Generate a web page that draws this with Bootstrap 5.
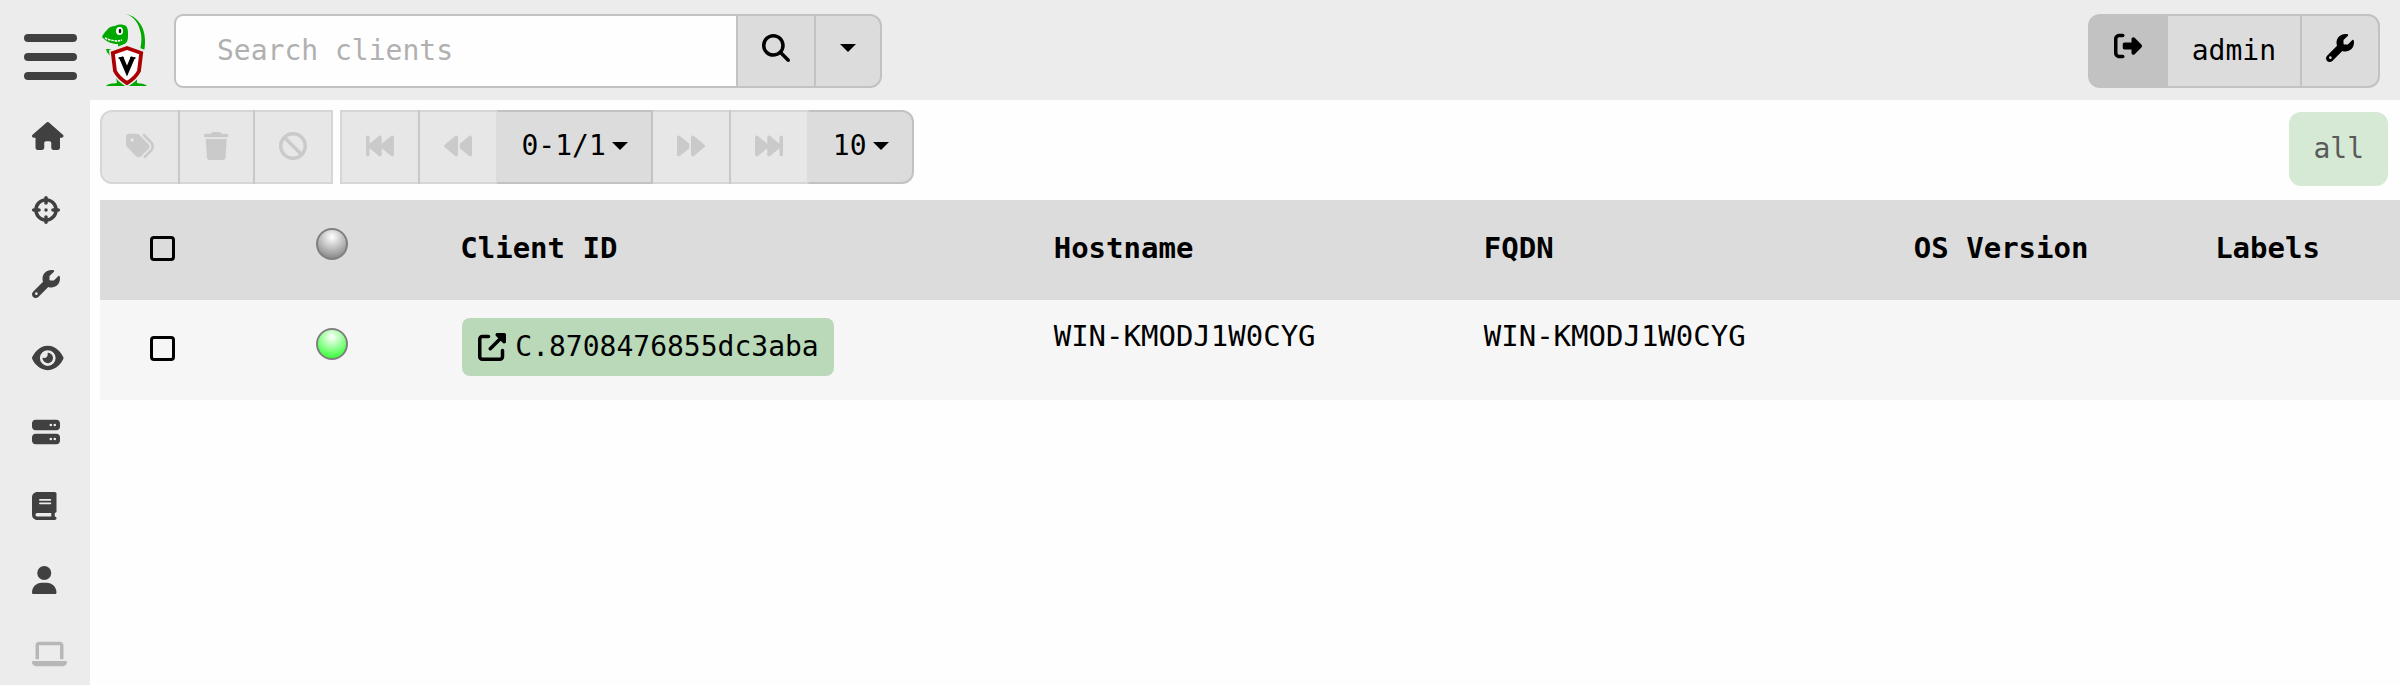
<!DOCTYPE html>
<html lang="en">
<head>
<meta charset="utf-8">
<meta name="viewport" content="width=device-width, initial-scale=1">
<title>Clients</title>
<link rel="stylesheet" href="https://cdn.jsdelivr.net/npm/bootstrap@5.3.0/dist/css/bootstrap.min.css">
<style>
  :root { --chrome: #ececec; --face: #dcdcdc; --edge: #c2c2c2; }
  body { font-family: "DejaVu Sans Mono", monospace; font-size: 28px; line-height: 42px; color: #000; background: #fefefe; }
  .ico { height: 28px; width: auto; fill: currentColor; display: block; }
  .topbar { height: 100px; background: var(--chrome); padding: 14px 20px 12px 24px; }
  .menu-btn { color: #404040; width: 53px; height: 74px; padding: 0; border: 0; background: none; }
  .menu-btn svg { width: 53px; height: 46px; margin-top: 12px; fill: currentColor; }
  .brand-link { margin: 0 27px 0 25px; }
  .brand-link svg { width: 45px; height: 74px; display: block; }
  .search-box { flex: 0 1 708px; }
  .search-box .form-control { border: 2px solid var(--edge); border-radius: 9px; font-size: 28px; color: #000; padding: 0 41px; background: #fefefe; }
  .search-box .form-control::placeholder { color: #b0b0b0; }
  .tool { height: 74px; border: 2px solid var(--edge); border-radius: 12px; background: var(--face); color: #000; font-size: 28px; line-height: 42px; padding: 0 24px 2px; display: inline-flex; align-items: center; }
  .topbar .tool { padding-bottom: 6px; }
  .topbar .tool.user-name { padding-bottom: 0; }
  .topbar .tool.tool-dark { background: var(--edge); padding-bottom: 10px; }
  .tool:disabled { background: var(--face); border-color: var(--edge); color: #afafaf; opacity: .65; padding-bottom: 2px; }
  .tool.page-menu { border-left-color: var(--face); padding-right: 23px; }
  .btn-group > .tool:not(:first-child), .input-group > .tool { margin-left: -2px !important; }
  .btn-group > .tool { flex: 0 0 auto; }
  .first-group { margin-right: -1px; }
  .first-group > .tool:last-child { border-radius: 0; }
  .pager > .tool:not(:last-child) { border-radius: 0; }
  .tool.dropdown-toggle::after { border-top: 8px solid; border-left: 8px solid transparent; border-right: 8px solid transparent; margin-left: 6px; }
  .tool.caret-only::after { margin-left: 0; }
  .sidebar { flex: 0 0 90px; background: var(--chrome); overflow: hidden; }
  .sidebar .nav-link { height: 74px; padding: 22px 0 24px 32px; color: #404040; display: flex; align-items: center; flex: none; }
  .sidebar .nav-link.disabled { color: #b7b7b7; }
  .shell { height: calc(100vh - 100px); }
  .toolbar { padding: 10px 12px 14px 10px; }
  .label-all { height: 74px; border-radius: 12px; background: #d5e9d5; color: #5a5a5a; font-size: 28px; padding: 0 24px; margin-top: 2px; border: 0; }
  .table-wrap { padding-left: 10px; }
  .clients { table-layout: fixed; width: 100%; font-size: 29px; line-height: 42px; }
  .clients th, .clients td { height: 100px; padding: 16px 13px 0; vertical-align: top; }
  .clients td { padding-top: 15px; }
  .clients th { background: var(--face); padding: 0 13px 4px; vertical-align: middle; }
  .clients td { background: #f6f6f6; }
  .clients .pick { padding: 36px 0 0 50px; vertical-align: top; }
  .clients .lamp-cell { padding: 28px 0 0 14px; vertical-align: top; }
  .clients .form-check-input { width: 25px; height: 25px; border: 3px solid #000; border-radius: 4px; background: transparent; margin: 0; display: block; }
  .lamp { width: 32px; height: 32px; border-radius: 50%; border: 2px solid #808080; display: block; background: radial-gradient(circle 24px at 50% 25%, #fff 0, #7a7a7a 100%); }
  .lamp.on { background: radial-gradient(circle 24px at 50% 25%, #fff 0, #1fff1f 100%); }
  .client-link { height: 58px; border: 0; border-radius: 8px; background: #b9d9b9; color: #000; font-size: 28px; padding: 0 15px 0 16px; margin: 3px 0 0 2px; gap: 9px; }
  .c-pick { width: 8.8%; } .c-lamp { width: 6.3%; } .c-id { width: 25.8%; } .c-host { width: 18.7%; } .c-os { width: 13.1%; }
</style>
</head>
<body>
<svg class="d-none" aria-hidden="true">
  <symbol id="wrench" viewBox="0 0 512 512"><path d="M352 320c88.4 0 160-71.6 160-160c0-15.3-2.2-30.1-6.2-44.2c-3.1-10.8-16.4-13.2-24.3-5.3l-76.8 76.8c-3 3-7.1 4.7-11.3 4.7H336c-8.8 0-16-7.2-16-16V118.6c0-4.2 1.7-8.3 4.7-11.3l76.8-76.8c7.9-7.9 5.4-21.2-5.3-24.3C382.1 2.2 367.3 0 352 0C263.6 0 192 71.6 192 160c0 19.1 3.4 37.5 9.5 54.5L19.9 396.1C7.2 408.8 0 426.1 0 444.1C0 481.6 30.4 512 67.9 512c18 0 35.3-7.2 48-19.9L297.5 310.5c17 6.2 35.4 9.5 54.5 9.5zM80 408a24 24 0 1 1 0 48 24 24 0 1 1 0-48z"/></symbol>
  <symbol id="back" viewBox="0 0 512 512"><path d="M459.5 440.6c9.5 7.9 22.8 9.7 34.1 4.4s18.4-16.6 18.4-29V96c0-12.4-7.2-23.7-18.4-29s-24.5-3.6-34.1 4.4L288 214.3V256v41.7L459.5 440.6zM256 352V256 128 96c0-12.4-7.2-23.7-18.4-29s-24.5-3.6-34.1 4.4l-192 160C4.2 237.5 0 246.5 0 256s4.2 18.5 11.5 24.6l192 160c9.5 7.9 22.8 9.7 34.1 4.4s18.4-16.6 18.4-29V352z"/></symbol>
  <symbol id="first" viewBox="0 0 512 512"><path d="M493.6 445c-11.2 5.3-24.5 3.6-34.1-4.4L288 297.7V416c0 12.4-7.2 23.7-18.4 29s-24.5 3.6-34.1-4.4L64 297.7V416c0 17.7-14.3 32-32 32s-32-14.3-32-32V96C0 78.3 14.3 64 32 64s32 14.3 32 32V214.3L235.5 71.4c9.5-7.9 22.8-9.7 34.1-4.4S288 83.6 288 96V214.3L459.5 71.4c9.5-7.9 22.8-9.7 34.1-4.4S512 83.6 512 96V416c0 12.4-7.2 23.7-18.4 29z"/></symbol>
</svg>

<header class="topbar d-flex align-items-start">
  <button class="menu-btn" type="button" aria-label="Menu"><svg viewBox="0 0 53 46"><rect y="0" width="53" height="8" rx="4"/><rect y="19" width="53" height="8" rx="4"/><rect y="38" width="53" height="8" rx="4"/></svg></button>
  <a class="brand-link" href="#" aria-label="Home">
    <svg viewBox="0 0 45 74">
      <path fill="#00a800" d="M24 0C35 2 43 13 43 26c0 4 0 7-1 11l-4-1c1-5 2-10 1-16C37 10 33 3 24 0z"/>
      <path fill="#00a800" d="M0 23c1-3 3-5 5-7 2-3 5-4 8-4 3-2 8-2 11 0 2 2 2 5 2 9 0 4 0 6-3 9l-3 3-4 1v-4C11 30 5 28 2 25z"/>
      <path fill="none" stroke="#fff" stroke-width="1.4" stroke-dasharray="2.5 .8" d="M3 24c4 2 9 3 13 3l4-1"/>
      <ellipse cx="17.500" cy="17" rx="3.500" ry="4" fill="#fff"/><ellipse cx="18" cy="17" rx="1.300" ry="2.200" fill="#111"/>
      <path fill="#00a800" d="M4 35h8l-1 2H8l3 4-3-1 0 2-3-4z"/>
      <path fill="#00a800" d="M4 72c3-3 6-2 11-3l-1-6 11 9zM45 72c-3-3-6-2-10-3l0-6-10 9z"/>
      <path fill="#ececec" d="M25 29l18 7-2 20c-3 8-9 13-16 17-7-4-13-9-16-17L7 36z"/>
      <path fill="#fff" stroke="#ad0000" stroke-width="3.8" d="M25 34l14.200 5-2.200 18c-3 6-7 9-12 12-5-3-9-6-12-12l-2.200-18z"/>
      <path fill="none" stroke="#000" stroke-width="4.400" d="M19 43l6 14 6-14"/><path stroke="#000" stroke-width="1.500" d="M16.500 44h5.500M28 44h5.500"/>
    </svg>
  </a>
  <div class="input-group search-box">
    <input class="form-control" type="search" placeholder="Search clients" aria-label="Search clients">
    <button class="btn tool" type="button" aria-label="Search"><svg class="ico" viewBox="0 0 512 512"><path d="M416 208c0 45.9-14.9 88.3-40 122.7L502.6 457.4c12.5 12.5 12.5 32.8 0 45.3s-32.8 12.5-45.3 0L330.7 376c-34.4 25.2-76.8 40-122.7 40C93.1 416 0 322.9 0 208S93.1 0 208 0S416 93.1 416 208zM208 352a144 144 0 1 0 0-288 144 144 0 1 0 0 288z"/></svg></button>
    <button class="btn tool dropdown-toggle caret-only" type="button" aria-label="Search options"></button>
  </div>
  <div class="btn-group ms-auto">
    <button class="btn tool tool-dark" type="button" aria-label="Log out"><svg class="ico" viewBox="0 0 512 512"><path d="M377.9 105.9L500.7 228.7c7.2 7.2 11.3 17.1 11.3 27.3s-4.1 20.1-11.3 27.3L377.9 406.1c-6.4 6.4-15 9.9-24 9.9c-18.7 0-33.9-15.2-33.9-33.9l0-62.1-128 0c-17.7 0-32-14.3-32-32l0-64c0-17.7 14.3-32 32-32l128 0 0-62.1c0-18.7 15.2-33.9 33.9-33.9c9 0 17.6 3.6 24 9.9zM160 96L96 96c-17.7 0-32 14.3-32 32l0 256c0 17.7 14.3 32 32 32l64 0c17.7 0 32 14.3 32 32s-14.3 32-32 32l-64 0c-53 0-96-43-96-96L0 128C0 75 43 32 96 32l64 0c17.7 0 32 14.3 32 32s-14.3 32-32 32z"/></svg></button>
    <button class="btn tool user-name" type="button">admin</button>
    <button class="btn tool" type="button" aria-label="Settings"><svg class="ico" viewBox="0 0 512 512"><use href="#wrench"/></svg></button>
  </div>
</header>

<div class="shell d-flex">
  <nav class="sidebar nav flex-column flex-nowrap" aria-label="Main">
    <a class="nav-link" href="#" aria-label="Home"><svg class="ico" viewBox="0 0 576 512"><path d="M575.8 255.5c0 18-15 32.1-32 32.1h-32l.7 160.2c0 2.7-.2 5.4-.5 8.1V472c0 22.1-17.9 40-40 40H456c-1.1 0-2.2 0-3.3-.1c-1.4 .1-2.8 .1-4.2 .1H416 392c-22.1 0-40-17.9-40-40V448 384c0-17.7-14.3-32-32-32H256c-17.7 0-32 14.3-32 32v64 24c0 22.1-17.9 40-40 40H160 128.1c-1.5 0-3-.1-4.5-.2c-1.2 .1-2.4 .2-3.6 .2H104c-22.1 0-40-17.9-40-40V360c0-.9 0-1.9 .1-2.8V287.6H32c-18 0-32-14-32-32.1c0-9 3-17 10-24L266.4 8c7-7 15-8 22-8s15 2 21 7L564.8 231.5c8 7 12 15 11 24z"/></svg></a>
    <a class="nav-link" href="#" aria-label="Hunts"><svg class="ico" viewBox="0 0 512 512"><path d="M256 0c17.7 0 32 14.3 32 32V42.4c93.7 13.9 167.7 88 181.6 181.6H480c17.7 0 32 14.3 32 32s-14.3 32-32 32H469.6c-13.9 93.7-88 167.7-181.6 181.6V480c0 17.7-14.3 32-32 32s-32-14.3-32-32V469.6C130.3 455.7 56.3 381.7 42.4 288H32c-17.7 0-32-14.3-32-32s14.3-32 32-32H42.4C56.3 130.3 130.3 56.3 224 42.4V32c0-17.7 14.3-32 32-32zM107.4 288c12.5 58.3 58.4 104.1 116.6 116.6V384c0-17.7 14.3-32 32-32s32 14.3 32 32v20.6c58.3-12.5 104.1-58.4 116.6-116.6H384c-17.7 0-32-14.3-32-32s14.3-32 32-32h20.6C392.1 165.7 346.3 119.9 288 107.4V128c0 17.7-14.3 32-32 32s-32-14.3-32-32V107.4C165.7 119.9 119.9 165.7 107.4 224H128c17.7 0 32 14.3 32 32s-14.3 32-32 32H107.4zM256 224a32 32 0 1 1 0 64 32 32 0 1 1 0-64z"/></svg></a>
    <a class="nav-link" href="#" aria-label="Artifacts"><svg class="ico" viewBox="0 0 512 512"><use href="#wrench"/></svg></a>
    <a class="nav-link" href="#" aria-label="Events"><svg class="ico" viewBox="0 0 576 512"><path d="M288 32c-80.8 0-145.5 36.8-192.6 80.6C48.6 156 17.3 208 2.5 243.7c-3.3 7.9-3.3 16.7 0 24.6C17.3 304 48.6 356 95.4 399.4C142.5 443.2 207.2 480 288 480s145.5-36.8 192.6-80.6c46.8-43.5 78.1-95.4 93-131.1c3.3-7.9 3.3-16.7 0-24.6c-14.9-35.7-46.2-87.7-93-131.1C433.5 68.8 368.8 32 288 32zM144 256a144 144 0 1 1 288 0 144 144 0 1 1 -288 0zm144-64c0 35.3-28.7 64-64 64c-7.1 0-13.9-1.2-20.3-3.3c-5.5-1.8-11.9 1.6-11.7 7.4c.3 6.9 1.3 13.8 3.2 20.7c13.7 51.2 66.4 81.6 117.6 67.9s81.6-66.4 67.9-117.6c-11.1-41.5-47.8-69.4-88.6-71.1c-5.8-.2-9.2 6.1-7.4 11.7c2.1 6.4 3.3 13.2 3.3 20.3z"/></svg></a>
    <a class="nav-link" href="#" aria-label="Server"><svg class="ico" viewBox="0 0 512 512"><path d="M64 32C28.7 32 0 60.7 0 96v64c0 35.3 28.7 64 64 64H448c35.3 0 64-28.7 64-64V96c0-35.3-28.7-64-64-64H64zm280 72a24 24 0 1 1 0 48 24 24 0 1 1 0-48zm48 24a24 24 0 1 1 48 0 24 24 0 1 1 -48 0zM64 288c-35.3 0-64 28.7-64 64v64c0 35.3 28.7 64 64 64H448c35.3 0 64-28.7 64-64V352c0-35.3-28.7-64-64-64H64zm280 72a24 24 0 1 1 0 48 24 24 0 1 1 0-48zm48 24a24 24 0 1 1 48 0 24 24 0 1 1 -48 0z"/></svg></a>
    <a class="nav-link" href="#" aria-label="Notebooks"><svg class="ico" viewBox="0 0 448 512"><path d="M96 0C43 0 0 43 0 96V416c0 53 43 96 96 96H384h32c17.7 0 32-14.3 32-32s-14.3-32-32-32V384c17.7 0 32-14.3 32-32V32c0-17.7-14.3-32-32-32H384 96zm0 384H352v64H96c-17.7 0-32-14.3-32-32s14.3-32 32-32zm32-240c0-8.8 7.2-16 16-16H336c8.8 0 16 7.2 16 16s-7.2 16-16 16H144c-8.8 0-16-7.2-16-16zm16 48H336c8.8 0 16 7.2 16 16s-7.2 16-16 16H144c-8.8 0-16-7.2-16-16s7.2-16 16-16z"/></svg></a>
    <a class="nav-link" href="#" aria-label="Users"><svg class="ico" viewBox="0 0 448 512"><path d="M224 256A128 128 0 1 0 224 0a128 128 0 1 0 0 256zm-45.7 48C79.8 304 0 383.8 0 482.3C0 498.7 13.3 512 29.7 512H418.3c16.4 0 29.7-13.3 29.7-29.7C448 383.8 368.2 304 269.7 304H178.3z"/></svg></a>
    <a class="nav-link disabled" href="#" aria-label="Host" aria-disabled="true"><svg class="ico" viewBox="0 0 640 512"><path d="M128 32C92.7 32 64 60.7 64 96V352h64V96H512V352h64V96c0-35.3-28.7-64-64-64H128zM19.2 384C8.6 384 0 392.6 0 403.2C0 445.6 34.4 480 76.8 480H563.2c42.4 0 76.8-34.4 76.8-76.8c0-10.6-8.6-19.2-19.2-19.2H19.2z"/></svg></a>
  </nav>

  <main class="flex-grow-1 overflow-hidden">
    <div class="toolbar d-flex align-items-start gap-2">
      <div class="btn-group first-group">
        <button class="btn tool" type="button" disabled aria-label="Label clients"><svg class="ico" viewBox="0 0 512 512"><path d="M345 39.1L472.8 168.4c52.4 53 52.4 138.2 0 191.2L360.8 472.9c-9.3 9.4-24.5 9.5-33.9 .2s-9.5-24.5-.2-33.9L438.6 325.9c33.9-34.3 33.9-89.4 0-123.7L310.9 72.9c-9.3-9.4-9.2-24.6 .2-33.9s24.6-9.2 33.9 .2zM0 229.5V80C0 53.5 21.5 32 48 32H197.5c17 0 33.3 6.7 45.3 18.7l168 168c25 25 25 65.5 0 90.5L277.3 442.7c-25 25-65.5 25-90.5 0l-168-168C6.7 262.7 0 246.5 0 229.5zM144 144a32 32 0 1 0 -64 0 32 32 0 1 0 64 0z"/></svg></button>
        <button class="btn tool" type="button" disabled aria-label="Delete clients"><svg class="ico" viewBox="0 0 448 512"><path d="M135.2 17.7L128 32H32C14.3 32 0 46.3 0 64S14.3 96 32 96H416c17.7 0 32-14.3 32-32s-14.3-32-32-32H320l-7.2-14.3C307.4 6.8 296.3 0 284.2 0H163.8c-12.1 0-23.2 6.8-28.6 17.7zM416 128H32L53.2 467c1.6 25.3 22.6 45 47.9 45H346.9c25.3 0 46.3-19.7 47.9-45L416 128z"/></svg></button>
        <button class="btn tool" type="button" disabled aria-label="Cancel flows"><svg class="ico" viewBox="0 0 512 512"><path d="M367.2 412.5L99.5 144.8C77.1 176.1 64 214.5 64 256c0 106 86 192 192 192c41.5 0 79.9-13.1 111.2-35.5zm45.3-45.3C434.9 335.9 448 297.5 448 256c0-106-86-192-192-192c-41.5 0-79.9 13.1-111.2 35.5L412.5 367.2zM0 256a256 256 0 1 1 512 0A256 256 0 1 1 0 256z"/></svg></button>
      </div>
      <div class="btn-group pager">
        <button class="btn tool" type="button" disabled aria-label="First page"><svg class="ico" viewBox="0 0 512 512"><use href="#first"/></svg></button>
        <button class="btn tool" type="button" disabled aria-label="Previous page"><svg class="ico" viewBox="0 0 512 512"><use href="#back"/></svg></button>
        <button class="btn tool page-menu dropdown-toggle" type="button">0-1/1</button>
        <button class="btn tool" type="button" disabled aria-label="Next page"><svg class="ico" viewBox="0 0 512 512"><g transform="translate(512) scale(-1 1)"><use href="#back" width="512" height="512"/></g></svg></button>
        <button class="btn tool" type="button" disabled aria-label="Last page"><svg class="ico" viewBox="0 0 512 512"><g transform="translate(512) scale(-1 1)"><use href="#first" width="512" height="512"/></g></svg></button>
        <button class="btn tool page-menu dropdown-toggle" type="button">10</button>
      </div>
      <button class="btn label-all ms-auto" type="button">all</button>
    </div>

    <div class="table-wrap">
      <table class="clients">
        <colgroup><col class="c-pick"><col class="c-lamp"><col class="c-id"><col class="c-host"><col class="c-host"><col class="c-os"><col></colgroup>
        <thead>
          <tr>
            <th class="pick"><input class="form-check-input" type="checkbox" aria-label="Select all"></th>
            <th class="lamp-cell"><span class="lamp" role="img" aria-label="Online state"></span></th>
            <th>Client ID</th><th>Hostname</th><th>FQDN</th><th>OS Version</th><th>Labels</th>
          </tr>
        </thead>
        <tbody>
          <tr>
            <td class="pick"><input class="form-check-input" type="checkbox" aria-label="Select client"></td>
            <td class="lamp-cell"><span class="lamp on" role="img" aria-label="Online"></span></td>
            <td><a class="client-link d-inline-flex align-items-center text-decoration-none" href="#"><svg class="ico" viewBox="0 0 512 512"><path d="M352 0c-12.9 0-24.6 7.8-29.6 19.8s-2.2 25.7 6.9 34.9L370.7 96 201.4 265.4c-12.5 12.5-12.5 32.8 0 45.3s32.8 12.5 45.3 0L416 141.3l41.4 41.4c9.2 9.2 22.9 11.9 34.9 6.9s19.8-16.6 19.8-29.6V32c0-17.7-14.3-32-32-32H352zM80 32C35.8 32 0 67.8 0 112V432c0 44.2 35.8 80 80 80H400c44.2 0 80-35.8 80-80V320c0-17.7-14.3-32-32-32s-32 14.3-32 32V432c0 8.8-7.2 16-16 16H80c-8.8 0-16-7.2-16-16V112c0-8.8 7.2-16 16-16H192c17.7 0 32-14.3 32-32s-14.3-32-32-32H80z"/></svg>C.8708476855dc3aba</a></td>
            <td>WIN-KMODJ1W0CYG</td><td>WIN-KMODJ1W0CYG</td><td></td><td></td>
          </tr>
        </tbody>
      </table>
    </div>
  </main>
</div>
<script src="https://cdn.jsdelivr.net/npm/bootstrap@5.3.0/dist/js/bootstrap.bundle.min.js"></script>
</body>
</html>
